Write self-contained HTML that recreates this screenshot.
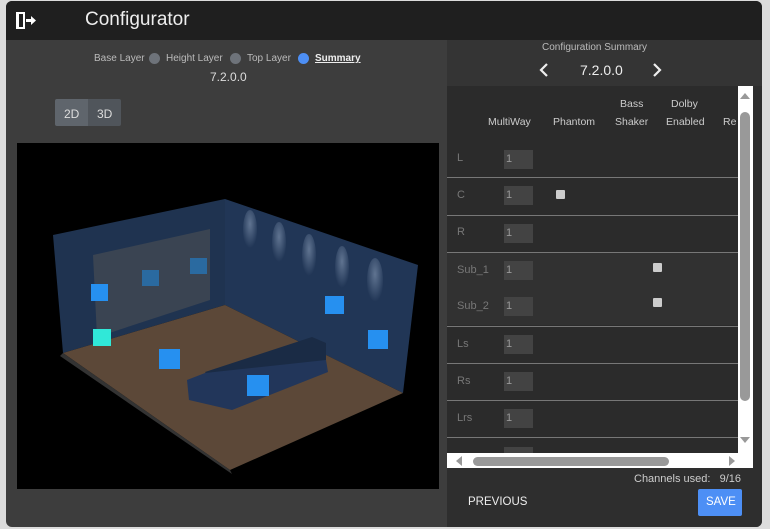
<!DOCTYPE html>
<html><head><style>
*{margin:0;padding:0;box-sizing:border-box}
body{width:770px;height:529px;background:#dcdcdc;font-family:"Liberation Sans",sans-serif;overflow:hidden;position:relative}
.win{position:absolute;left:6px;top:1px;width:756px;height:526px;background:#3d3d3d;border-radius:6px;overflow:hidden}
.title{position:absolute;left:0;top:0;width:756px;height:39px;background:#1f1f1f}
.abs{position:absolute}
.t{color:#ddd;position:absolute;white-space:nowrap}
.right{position:absolute;left:441px;top:39px;width:315px;height:487px;background:#2e2e2e}
.rtop{position:absolute;left:0;top:0;width:315px;height:46px;background:#343434}
.row{position:absolute;left:441px;width:291px;height:37px}
.inp{position:absolute;left:57px;width:29px;height:19px;background:#434343;color:#999;font-size:11px;padding:3px 2px}
.lbl{position:absolute;left:10px;color:#777;font-size:11px}
.div{position:absolute;left:441px;width:291px;height:1px;background:#777}
.chk{position:absolute;width:9px;height:9px;background:#ccc;border-radius:1px}
</style></head><body>
<div class="win">
<div class="title">
 <svg class="abs" style="left:10px;top:11px" width="20" height="17" viewBox="0 0 20 17"><rect x="0" y="0" width="9" height="17" fill="#fff"/><rect x="3" y="2" width="4" height="13" fill="#1f1f1f"/><path d="M10 7h5V4l5 4.5-5 4.5v-3h-5z" fill="#fff"/></svg>
 <div class="t" style="left:79px;top:8px;font-size:19px;color:#eee">Configurator</div>
</div>
<div class="t" style="left:88px;top:52px;font-size:10px;color:#bbb">Base Layer</div>
<div class="abs" style="left:143px;top:52px;width:11px;height:11px;border-radius:50%;background:#6e737a"></div>
<div class="t" style="left:160px;top:52px;font-size:10px;color:#bbb">Height Layer</div>
<div class="abs" style="left:224px;top:52px;width:11px;height:11px;border-radius:50%;background:#6e737a"></div>
<div class="t" style="left:241px;top:52px;font-size:10px;color:#bbb">Top Layer</div>
<div class="abs" style="left:292px;top:52px;width:11px;height:11px;border-radius:50%;background:#4d8ff5"></div>
<div class="t" style="left:309px;top:52px;font-size:10px;color:#eee;font-weight:bold;text-decoration:underline">Summary</div>
<div class="t" style="left:204px;top:69px;font-size:12px;color:#ddd">7.2.0.0</div>
<div class="abs" style="left:49px;top:98px;width:33px;height:27px;background:#5f656c;border-radius:2px 0 0 2px"></div>
<div class="abs" style="left:82px;top:98px;width:33px;height:27px;background:#50555b;border-radius:0 2px 2px 0"></div>
<div class="t" style="left:58px;top:106px;font-size:12px">2D</div>
<div class="t" style="left:91px;top:106px;font-size:12px">3D</div>
<svg class="abs" style="left:11px;top:142px" width="422" height="346" viewBox="17 143 422 346">
 <defs><radialGradient id="lg" cx=".5" cy=".35" r=".6"><stop offset="0" stop-color="#9fb2cc" stop-opacity=".5"/><stop offset="1" stop-color="#9fb2cc" stop-opacity="0"/></radialGradient></defs>
 <rect x="17" y="143" width="422" height="346" fill="#000"/>
 <polygon points="53,235 225,199 225,305 63,353" fill="#1f3350"/>
 <polygon points="225,199 418,265 403,393 225,305" fill="#213656"/>
 <polygon points="63,353 225,305 403,393 230,470" fill="#5c4838"/>
 <polygon points="63,353 230,470 232,474 60,356" fill="#333"/>
 <polygon points="93,255 210,229 210,300 97,337" fill="#3a4452"/>
 <g fill="url(#lg)"><ellipse cx="250" cy="230" rx="7" ry="20"/><ellipse cx="279" cy="243" rx="7" ry="21"/><ellipse cx="309" cy="256" rx="7" ry="22"/><ellipse cx="342" cy="268" rx="7" ry="22"/><ellipse cx="375" cy="281" rx="8" ry="23"/></g>
 <polygon points="205,372 312,337 326,343 326,360 220,395" fill="#1a2b45"/>
 <polygon points="187,380 205,373 326,360 328,372 232,410 189,400" fill="#22365a"/>
 <g fill="#2690f0"><rect x="91" y="284" width="17" height="17"/><rect x="325" y="296" width="19" height="18"/><rect x="368" y="330" width="20" height="19"/><rect x="159" y="349" width="21" height="20"/><rect x="247" y="375" width="22" height="21"/></g>
 <g fill="#2a6aa0"><rect x="142" y="270" width="17" height="16"/><rect x="190" y="258" width="17" height="16"/></g>
 <rect x="93" y="329" width="18" height="17" fill="#30e8d8"/>
</svg>
<div class="right"><div class="rtop"></div></div>
<div class="t" style="left:536px;top:41px;font-size:10px;color:#bbb">Configuration Summary</div>
<svg class="abs" style="left:533px;top:62px" width="10" height="14"><path d="M8 1L2 7l6 6" stroke="#eee" stroke-width="2.2" fill="none"/></svg>
<div class="t" style="left:574px;top:61px;font-size:14px;color:#eee">7.2.0.0</div>
<svg class="abs" style="left:646px;top:62px" width="10" height="14"><path d="M2 1l6 6-6 6" stroke="#eee" stroke-width="2.2" fill="none"/></svg>
<div class="abs" style="left:441px;top:85px;width:291px;height:367px;background:#2b2b2b"></div>
<div class="t" style="left:482px;top:115px;font-size:10.5px;color:#ccc">MultiWay</div>
<div class="t" style="left:547px;top:115px;font-size:10.5px;color:#ccc">Phantom</div>
<div class="t" style="left:614px;top:97px;font-size:10.5px;color:#ccc">Bass</div>
<div class="t" style="left:609px;top:115px;font-size:10.5px;color:#ccc">Shaker</div>
<div class="t" style="left:665px;top:97px;font-size:10.5px;color:#ccc">Dolby</div>
<div class="t" style="left:660px;top:115px;font-size:10.5px;color:#ccc">Enabled</div>
<div class="t" style="left:717px;top:115px;font-size:10.5px;color:#ccc">Re</div>
<div class="abs" style="left:441px;top:251px;width:291px;height:73px;background:#313131"></div>
<div class="row" style="top:139px"><span class="lbl" style="top:12px">L</span><div class="inp" style="top:10px">1</div></div>
<div class="div" style="top:176px"></div>
<div class="row" style="top:177px"><span class="lbl" style="top:11px">C</span><div class="inp" style="top:8px">1</div></div>
<div class="chk" style="left:550px;top:189px"></div>
<div class="div" style="top:214px"></div>
<div class="row" style="top:215px"><span class="lbl" style="top:10px">R</span><div class="inp" style="top:8px">1</div></div>
<div class="div" style="top:251px"></div>
<div class="row" style="top:252px"><span class="lbl" style="top:11px">Sub_1</span><div class="inp" style="top:8px">1</div></div>
<div class="chk" style="left:647px;top:262px"></div>
<div class="row" style="top:288px"><span class="lbl" style="top:11px">Sub_2</span><div class="inp" style="top:8px">1</div></div>
<div class="chk" style="left:647px;top:297px"></div>
<div class="div" style="top:325px"></div>
<div class="row" style="top:326px"><span class="lbl" style="top:11px">Ls</span><div class="inp" style="top:8px">1</div></div>
<div class="div" style="top:362px"></div>
<div class="row" style="top:363px"><span class="lbl" style="top:11px">Rs</span><div class="inp" style="top:8px">1</div></div>
<div class="div" style="top:399px"></div>
<div class="row" style="top:400px"><span class="lbl" style="top:11px">Lrs</span><div class="inp" style="top:8px">1</div></div>
<div class="div" style="top:436px"></div>
<div class="inp" style="left:498px;top:446px;height:6px;padding:0"></div>
<div class="abs" style="left:732px;top:85px;width:15px;height:382px;background:#fff"></div>
<div class="abs" style="left:441px;top:452px;width:306px;height:15px;background:#fff"></div>
<div class="abs" style="left:734px;top:111px;width:10px;height:289px;background:#999;border-radius:5px"></div>
<svg class="abs" style="left:734px;top:91px" width="10" height="8"><path d="M0 7L5 1l5 6z" fill="#999"/></svg>
<svg class="abs" style="left:734px;top:435px" width="10" height="8"><path d="M0 1l5 6 5-6z" fill="#999"/></svg>
<div class="abs" style="left:467px;top:456px;width:196px;height:9px;background:#999;border-radius:5px"></div>
<svg class="abs" style="left:449px;top:455px" width="8" height="10"><path d="M7 0L1 5l6 5z" fill="#999"/></svg>
<svg class="abs" style="left:722px;top:455px" width="8" height="10"><path d="M1 0l6 5-6 5z" fill="#999"/></svg>
<div class="t" style="left:628px;top:472px;font-size:11px;color:#ccc">Channels used:&nbsp;&nbsp; 9/16</div>
<div class="t" style="left:462px;top:495px;font-size:11.5px;color:#eee">PREVIOUS</div>
<div class="abs" style="left:692px;top:488px;width:44px;height:27px;background:#4d8ff5;border-radius:2px"></div>
<div class="t" style="left:700px;top:495px;font-size:11.5px;color:#fff">SAVE</div>
</div>
</body></html>
